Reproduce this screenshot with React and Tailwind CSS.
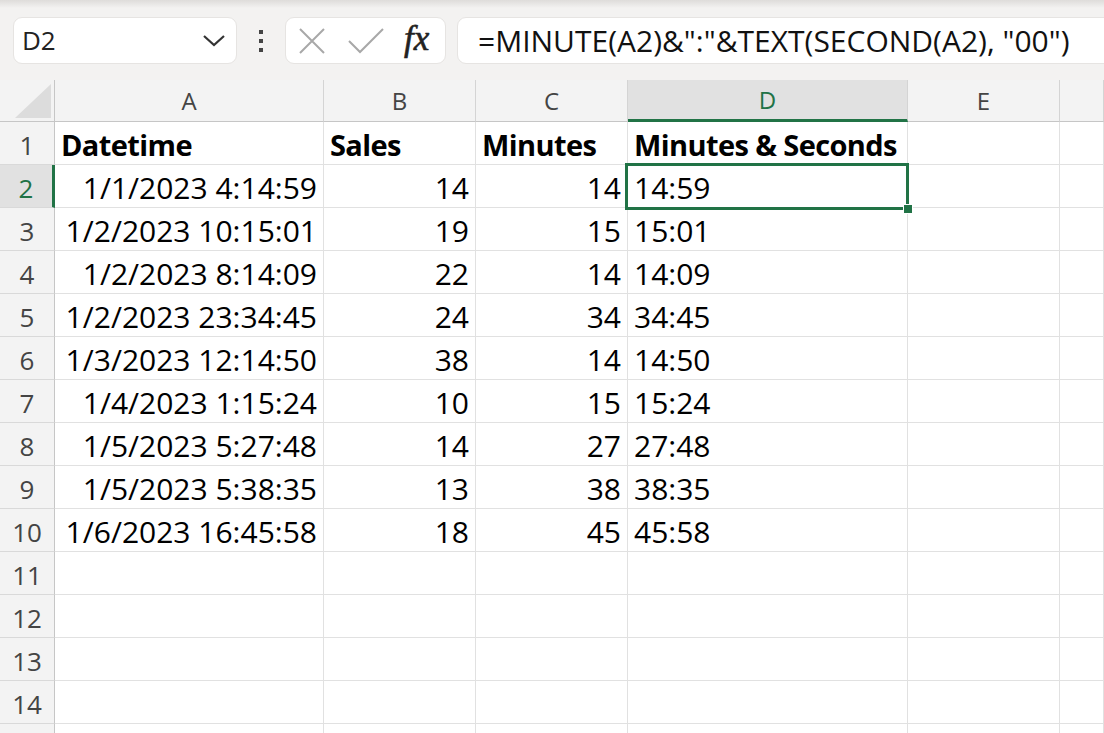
import React from "react";

const rows = [
  ["1/1/2023 4:14:59", "14", "14", "14:59"],
  ["1/2/2023 10:15:01", "19", "15", "15:01"],
  ["1/2/2023 8:14:09", "22", "14", "14:09"],
  ["1/2/2023 23:34:45", "24", "34", "34:45"],
  ["1/3/2023 12:14:50", "38", "14", "14:50"],
  ["1/4/2023 1:15:24", "10", "15", "15:24"],
  ["1/5/2023 5:27:48", "14", "27", "27:48"],
  ["1/5/2023 5:38:35", "13", "38", "38:35"],
  ["1/6/2023 16:45:58", "18", "45", "45:58"],
];

const F = { fontFamily: '"Open Sans", "Noto Sans", sans-serif' };

function ColHeader({ label, selected }) {
  return (
    <div
      className={
        "flex items-center justify-center border-r border-[#d4d4d4] text-[24px] " +
        (selected
          ? "bg-[#e1e1e1] text-[#217346] border-b-[3px] border-b-[#217346]"
          : "bg-[#f3f3f3] text-[#444] border-b border-b-[#c6c6c6]")
      }
    >
      {label}
    </div>
  );
}

function RowHeader({ n, selected }) {
  return (
    <div
      className={
        "flex items-end justify-center pb-[0px] text-[26px] leading-[38px] border-b border-[#d9d9d9] " +
        (selected
          ? "bg-[#e1e1e1] text-[#217346] border-r-[3px] border-r-[#217346]"
          : "bg-[#f3f3f3] text-[#444] border-r border-r-[#c6c6c6]")
      }
    >
      {n}
    </div>
  );
}

function Cell({ children, align = "left", bold, sel }) {
  return (
    <div
      className={
        "relative flex items-end border-r border-b border-[#e1e1e1] bg-white text-black leading-[38px] whitespace-nowrap " +
        (align === "right" ? "justify-end pr-[6px] " : "justify-start pl-[6px] ") +
        (bold ? "font-bold text-[29px] tracking-[-0.6px]" : "text-[30px]")
      }
    >
      {children}
      {sel && (
        <div className="absolute z-10 left-[-3px] top-[-2px] right-[-2px] bottom-[-3px] border-[3px] border-[#217346] pointer-events-none">
          <div className="absolute right-[-7px] bottom-[-7px] w-[10px] h-[10px] bg-[#217346] border border-white" />
        </div>
      )}
    </div>
  );
}

export default function App() {
  const total = 15;
  return (
    <div className="w-[1104px] h-[733px] overflow-hidden bg-white" style={F}>
      {/* top bar */}
      <div className="relative h-[80px] bg-[#f3f2f1] flex items-start pt-[17px] pl-[13px] overflow-hidden">
        <div className="absolute left-0 right-0 top-0 h-[8px] bg-gradient-to-b from-[#dedcda] to-[#f3f2f1]" />
        <div className="relative shrink-0 w-[224px] h-[47px] bg-white rounded-[9px] border border-[#e6e4e2] flex items-center pl-[8px] pr-[10px] justify-between">
          <span className="text-[26px] text-[#222]">D2</span>
          <svg width="24" height="14" viewBox="0 0 24 14">
            <path d="M2 2 L12 11 L22 2" fill="none" stroke="#333" strokeWidth="2.2" />
          </svg>
        </div>
        <div className="relative shrink-0 w-[48px] h-[47px] flex flex-col items-center justify-center gap-[5px]">
          <div className="w-[4px] h-[4px] bg-[#444]" />
          <div className="w-[4px] h-[4px] bg-[#444]" />
          <div className="w-[4px] h-[4px] bg-[#444]" />
        </div>
        <div className="relative shrink-0 w-[161px] h-[47px] bg-white rounded-[9px] border border-[#e6e4e2] flex items-center pl-[12px] pr-[8px]">
          <svg width="28" height="28" viewBox="0 0 28 28">
            <path d="M2 2 L26 26 M26 2 L2 26" stroke="#a8a8a8" strokeWidth="2" />
          </svg>
          <svg className="ml-[22px]" width="36" height="26" viewBox="0 0 36 26">
            <path d="M1 13 L12 24 L35 1" fill="none" stroke="#a8a8a8" strokeWidth="2" />
          </svg>
          <span
            className="ml-[20px] text-[35px] italic text-[#222] leading-none -mt-[4px]"
            style={{ fontFamily: '"Liberation Serif", "DejaVu Serif", serif', WebkitTextStroke: "0.6px #222" }}
          >
            fx
          </span>
        </div>
        <div className="relative shrink-0 ml-[11px] w-[700px] h-[47px] bg-white rounded-[9px] border border-[#e6e4e2] flex items-center pl-[20px]">
          <span className="text-[30px] text-[#111] whitespace-nowrap tracking-[0px]">
            =MINUTE(A2)&amp;":"&amp;TEXT(SECOND(A2), "00")
          </span>
        </div>
      </div>

      {/* grid */}
      <div
        className="grid"
        style={{
          gridTemplateColumns: "55px 269px 152px 152px 280px 152px 1fr",
          gridTemplateRows: `42px repeat(${total}, 43px)`,
        }}
      >
        <div className="relative bg-[#f3f3f3] border-r border-b border-[#c6c6c6]">
          <svg className="absolute right-[3px] bottom-[3px]" width="36" height="34" viewBox="0 0 36 34">
            <path d="M36 0 L36 34 L0 34 Z" fill="#dcdcdc" />
          </svg>
        </div>
        <ColHeader label="A" />
        <ColHeader label="B" />
        <ColHeader label="C" />
        <ColHeader label="D" selected />
        <ColHeader label="E" />
        <ColHeader label="" />

        <RowHeader n={1} />
        <Cell bold>Datetime</Cell>
        <Cell bold>Sales</Cell>
        <Cell bold>Minutes</Cell>
        <Cell bold>Minutes &amp; Seconds</Cell>
        <Cell />
        <Cell />

        {rows.map((r, i) => (
          <React.Fragment key={i}>
            <RowHeader n={i + 2} selected={i === 0} />
            <Cell align="right">{r[0]}</Cell>
            <Cell align="right">{r[1]}</Cell>
            <Cell align="right">{r[2]}</Cell>
            <Cell sel={i === 0}>{r[3]}</Cell>
            <Cell />
            <Cell />
          </React.Fragment>
        ))}

        {[11, 12, 13, 14, ""].map((n, k) => (
          <React.Fragment key={k}>
            <RowHeader n={n} />
            <Cell />
            <Cell />
            <Cell />
            <Cell />
            <Cell />
            <Cell />
          </React.Fragment>
        ))}
      </div>
    </div>
  );
}
